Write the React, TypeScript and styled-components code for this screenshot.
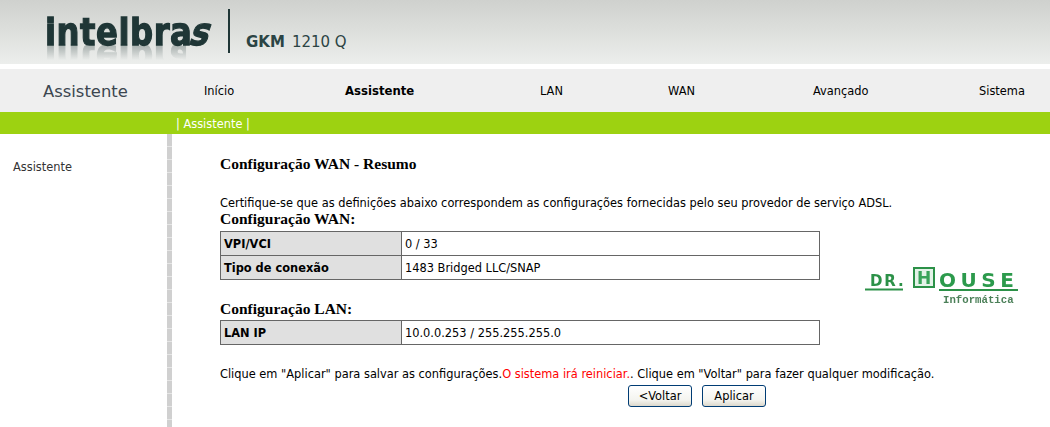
import React from 'react';
import styled, { createGlobalStyle } from 'styled-components';

const GlobalStyle = createGlobalStyle`
  html, body {
    margin: 0;
    padding: 0;
    background: #fff;
  }
  body {
    font-family: "DejaVu Sans", Verdana, sans-serif;
    font-size: 11.4px;
    color: #000;
  }
`;

const Page = styled.div`
  width: 1050px;
  height: 427px;
  overflow: hidden;
  display: flex;
  flex-direction: column;
`;

const Banner = styled.header`
  height: 64px;
  margin-bottom: 5px;
  display: flex;
  align-items: flex-start;
  padding-left: 45px;
  background: linear-gradient(180deg, #cfd1ce 0%, #dcdedb 45%, #eceeec 100%);
`;

const Brand = styled.div`
  flex: none;
  width: 166px;
  height: 40px;
  margin-top: 12px;
  font-weight: 700;
  font-size: 38px;
  line-height: 40px;
  letter-spacing: 0.6px;
  color: #1f3636;
  -webkit-text-stroke: 1.3px #1f3636;
  white-space: nowrap;
  transform: scaleX(0.85);
  transform-origin: left top;
  -webkit-box-reflect: below -14px linear-gradient(transparent 45%, rgba(0, 0, 0, 0.3) 82%);
`;

const BrandTail = styled.span`
  display: inline-block;
  transform: skewX(-22deg);
`;

const Divider = styled.div`
  width: 2px;
  height: 44px;
  margin: 9px 16px 0 17px;
  background: #1f3636;
`;

const Model = styled.div`
  margin-top: 33px;
  font-size: 15px;
  line-height: 18px;
  color: #2b4444;
  white-space: nowrap;

  b {
    font-size: 15px;
    margin-right: 7px;
  }
`;

const Nav = styled.nav`
  height: 43px;
  padding-top: 1px;
  box-sizing: border-box;
  display: grid;
  grid-template-columns: 204px 141px 195px 128px 145px 166px auto;
  align-items: center;
  background: #efefef;
`;

const NavTitle = styled.div`
  padding-left: 43px;
  font-size: 16.4px;
  color: #3c4650;
`;

const NavItem = styled.a<{ $active?: boolean }>`
  font-size: ${(p) => (p.$active ? 11.7 : 11.4)}px;
  font-weight: ${(p) => (p.$active ? 700 : 400)};
  color: #000;
  white-space: nowrap;
`;

const SubNav = styled.div`
  height: 22px;
  padding: 1px 0 0 176px;
  box-sizing: border-box;
  display: flex;
  align-items: center;
  background: #9dd211;
  color: #fff;
  font-size: 11.4px;
`;

const Body = styled.div`
  flex: 1;
  display: flex;
  min-height: 0;
`;

const Sidebar = styled.aside`
  width: 167px;
  padding: 25px 0 0 13px;
  box-sizing: border-box;
  color: #333;
  font-size: 11.4px;
  line-height: 16px;
`;

const Rule = styled.div`
  width: 5px;
  background: repeating-linear-gradient(180deg, #d0d0d0 0 12px, #e6e6e6 12px 13px);
`;

const Content = styled.main`
  padding: 21px 0 0 48px;
  flex: 1;
`;

const Title = styled.h3<{ $top?: number; $bottom?: number }>`
  margin: ${(p) => p.$top ?? 0}px 0 ${(p) => p.$bottom ?? 0}px;
  font-family: "Liberation Serif", "Times New Roman", serif;
  font-size: 15.5px;
  line-height: 18px;
  font-weight: 700;
  white-space: nowrap;
`;

const Text = styled.p<{ $top: number }>`
  margin: ${(p) => p.$top}px 0 0;
  font-size: 11.4px;
  line-height: 15px;
  white-space: nowrap;
`;

const Warning = styled.span`
  color: #f00;
`;

const Split = styled.div`
  display: flex;
  align-items: flex-start;
`;

const Tables = styled.div`
  width: 600px;
`;

const DataTable = styled.table`
  width: 100%;
  border-collapse: collapse;
  table-layout: fixed;
  border-top: 1px solid #777;
  border-left: 1px solid #777;
  border-right: 1px solid #555;
  border-bottom: 1px solid #555;

  th, td {
    height: 24px;
    padding: 0 3px;
    box-sizing: border-box;
    text-align: left;
    font-size: 11.4px;
    border: 1px solid #666;
  }

  th {
    width: 181px;
    background: #e0e0e0;
    font-weight: 700;
  }
`;

const Logo = styled.svg`
  flex: none;
  margin: 55px 0 0 45px;
  filter: blur(0.35px);
`;

const Actions = styled.div`
  display: flex;
  gap: 10px;
  padding: 3px 0 0 408px;
`;

const Button = styled.button`
  width: 64px;
  height: 22px;
  padding: 0;
  font-family: "DejaVu Sans", Verdana, sans-serif;
  font-size: 11.4px;
  color: #000;
  border: 1px solid #003c74;
  border-radius: 3px;
  background: linear-gradient(180deg, #fff 0%, #f4f4ef 70%, #dcd8cc 100%);
`;

export default function App() {
  return (
    <Page>
      <GlobalStyle />
      <Banner>
        <Brand>
          intelbra<BrandTail>s</BrandTail>
        </Brand>
        <Divider />
        <Model><b>GKM</b>1210 Q</Model>
      </Banner>
      <Nav>
        <NavTitle>Assistente</NavTitle>
        <NavItem>Início</NavItem>
        <NavItem $active>Assistente</NavItem>
        <NavItem>LAN</NavItem>
        <NavItem>WAN</NavItem>
        <NavItem>Avançado</NavItem>
        <NavItem>Sistema</NavItem>
      </Nav>
      <SubNav>| Assistente |</SubNav>
      <Body>
        <Sidebar>Assistente</Sidebar>
        <Rule />
        <Content>
          <Title>Configuração WAN - Resumo</Title>
          <Text $top={23}>Certifique-se que as definições abaixo correspondem as configurações fornecidas pelo seu provedor de serviço ADSL.</Text>
          <Split>
            <Tables>
              <Title $top={-1} $bottom={3}>Configuração WAN:</Title>
              <DataTable>
                <tbody>
                  <tr><th>VPI/VCI</th><td>0 / 33</td></tr>
                  <tr><th>Tipo de conexão</th><td>1483 Bridged LLC/SNAP</td></tr>
                </tbody>
              </DataTable>
              <Title $top={20} $bottom={2}>Configuração LAN:</Title>
              <DataTable>
                <tbody>
                  <tr><th>LAN IP</th><td>10.0.0.253 / 255.255.255.0</td></tr>
                </tbody>
              </DataTable>
            </Tables>
            <Logo width="155" height="42" viewBox="0 0 155 42">
              <text x="5" y="20" fontFamily="DejaVu Sans" fontSize="15" fontWeight="700" letterSpacing="1.8" fill="#2c9148">DR.</text>
              <rect x="49" y="2" width="20" height="19" fill="#e4f3e8" stroke="#2c9148" strokeWidth="2" />
              <text x="52" y="18" fontFamily="DejaVu Sans" fontSize="17" fontWeight="700" fill="#3aa35a">H</text>
              <text x="74" y="21" fontFamily="DejaVu Sans" fontSize="20" fontWeight="700" letterSpacing="4.5" fill="#2c9a4c">OUSE</text>
              <path d="M0 23.5H38M74 24H153" stroke="#2c9148" strokeWidth="2" />
              <text x="78" y="37" fontFamily="Liberation Mono" fontWeight="700" fontSize="10.7" fill="#4c8059">Informática</text>
            </Logo>
          </Split>
          <Text $top={22}>Clique em "Aplicar" para salvar as configurações.<Warning>O sistema irá reiniciar.</Warning>. Clique em "Voltar" para fazer qualquer modificação.</Text>
          <Actions>
            <Button>&lt;Voltar</Button>
            <Button>Aplicar</Button>
          </Actions>
        </Content>
      </Body>
    </Page>
  );
}
